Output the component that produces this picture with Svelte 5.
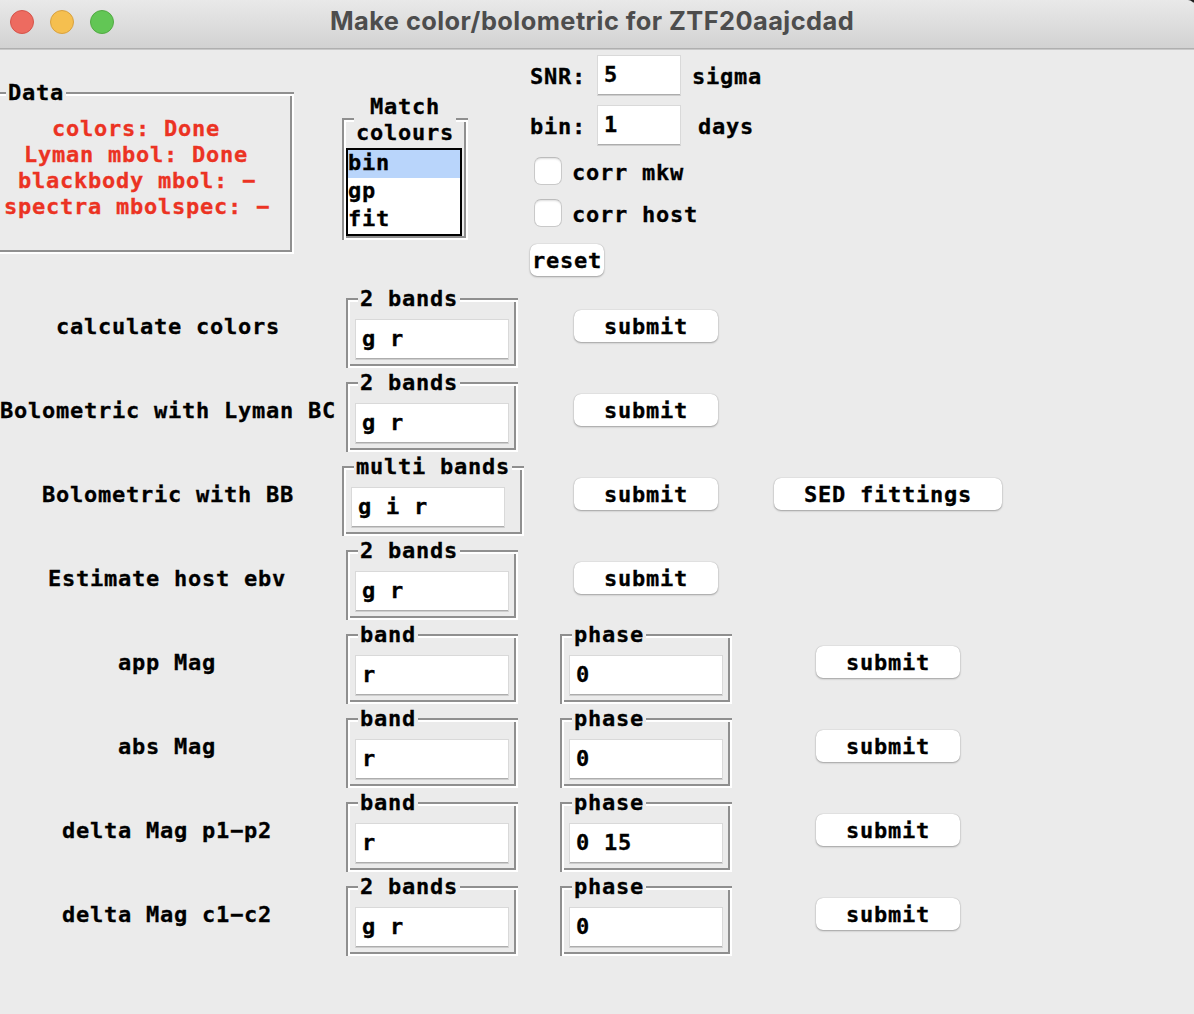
<script>
  const status = ['colors: Done', 'Lyman mbol: Done', 'blackbody mbol: −', 'spectra mbolspec: −'];
  const methods = ['bin', 'gp', 'fit'];
  let selected = $state('bin');

  const rows = [
    { label: 'calculate colors', fields: [{ title: '2 bands', value: 'g r' }], actions: ['submit'] },
    { label: 'Bolometric with Lyman BC', fields: [{ title: '2 bands', value: 'g r' }], actions: ['submit'] },
    { label: 'Bolometric with BB', fields: [{ title: 'multi bands', value: 'g i r', wide: true }], actions: ['submit', 'SED fittings'] },
    { label: 'Estimate host ebv', fields: [{ title: '2 bands', value: 'g r' }], actions: ['submit'] },
    { label: 'app Mag', fields: [{ title: 'band', value: 'r' }, { title: 'phase', value: '0' }], actions: ['submit'] },
    { label: 'abs Mag', fields: [{ title: 'band', value: 'r' }, { title: 'phase', value: '0' }], actions: ['submit'] },
    { label: 'delta Mag p1−p2', fields: [{ title: 'band', value: 'r' }, { title: 'phase', value: '0 15' }], actions: ['submit'] },
    { label: 'delta Mag c1−c2', fields: [{ title: '2 bands', value: 'g r' }, { title: 'phase', value: '0' }], actions: ['submit'] }
  ];
</script>

<div class="window">
  <header class="titlebar">
    <div class="lights">
      <span class="light close"></span>
      <span class="light minimize"></span>
      <span class="light zoom"></span>
    </div>
    <h1>Make color/bolometric for ZTF20aajcdad</h1>
  </header>

  <section class="top">
    <div class="groove data">
      <span class="legend">Data</span>
      <div class="status">
        {#each status as line}
          <div class:snap={line.length % 2 === 0}>{line}</div>
        {/each}
      </div>
    </div>

    <div class="groove match">
      <span class="legend two-line">Match<br />colours</span>
      <div class="listbox">
        {#each methods as method}
          <button class="option" class:selected={selected === method} onclick={() => (selected = method)}>{method}</button>
        {/each}
      </div>
    </div>

    <div class="options">
      <label class="setting snr"><span>SNR:</span><input class="entry" value="5" /><span>sigma</span></label>
      <label class="setting days"><span>bin:</span><input class="entry" value="1" /><span>days</span></label>
      <label class="check"><input type="checkbox" /><span>corr mkw</span></label>
      <label class="check"><input type="checkbox" /><span>corr host</span></label>
      <button class="push reset">reset</button>
    </div>
  </section>

  <section class="tasks">
    {#each rows as row}
      <div class="row">
        <div class="name" class:snap={row.label.length % 2 === 1}>{row.label}</div>
        {#each row.fields as field}
          <div class="cell">
            <div class="groove field" class:wide={field.wide}>
              <span class="legend">{field.title}</span>
              <input class="entry" value={field.value} />
            </div>
          </div>
        {/each}
        {#each row.actions as action}
          <div class="cell"><button class="push" class:large={action !== 'submit'}>{action}</button></div>
        {/each}
      </div>
    {/each}
  </section>
</div>

<style>
  :global(body) {
    margin: 0;
    background: #ebebeb;
  }

  .window {
    width: 1194px;
    height: 1014px;
    overflow: hidden;
    background: linear-gradient(#1c1c1c 2px, #ebebeb 3px);
    color: #000;
    font: bold 22px/26px 'DejaVu Sans Mono', monospace;
    letter-spacing: 0.755px;
    white-space: nowrap;
    -webkit-text-stroke: 0.3px;
  }

  button,
  input {
    font: inherit;
    letter-spacing: inherit;
    color: inherit;
    margin: 0;
    box-sizing: border-box;
  }

  .titlebar {
    box-sizing: border-box;
    height: 50px;
    display: grid;
    grid-template-columns: 330px 1fr;
    background: linear-gradient(#e9e9e9, #d2d2d2 48px);
    border-bottom: 1px solid #c8c8c8;
    border-top-right-radius: 6px;
    box-shadow: inset 0 -1px #afafaf;
  }

  .lights {
    display: flex;
    gap: 16px;
    padding: 10px;
  }

  .light {
    box-sizing: border-box;
    width: 24px;
    height: 24px;
    border-radius: 50%;
    border: 1px solid;
  }

  .close { background: #ed6b60; border-color: #d5544a; }
  .minimize { background: #f5bf4f; border-color: #d8a140; }
  .zoom { background: #62c655; border-color: #52aa43; }

  h1 {
    margin: 0;
    padding-top: 6px;
    font: 700 25.4px/30px Inter, sans-serif;
    letter-spacing: 0.44px;
    color: #4d4d4d;
    -webkit-text-stroke: 0;
  }

  /* Two-tone etched frame: dark outer top/left, light outer bottom/right, reversed inside. */
  .groove {
    --d: linear-gradient(#8f8f8f, #8f8f8f);
    --l: linear-gradient(#fff, #fff);
    position: relative;
    box-sizing: border-box;
    background-image: var(--d), var(--d), var(--l), var(--l), var(--l), var(--l), var(--d), var(--d);
    background-size: 100% 2px, 2px 100%, 100% 2px, 2px 100%, 100% 2px, 2px 100%, 100% 2px, 2px 100%;
    background-position: 0 0, 0 0, 0 100%, 100% 0, 0 2px, 2px 0, left 0 bottom 2px, right 2px top 0;
    background-repeat: no-repeat;
  }

  .legend {
    position: absolute;
    top: -12px;
    left: 12px;
    padding: 0 2px;
    background: #ebebeb;
    text-align: center;
  }

  .top {
    height: 234px;
    display: flex;
    align-items: flex-start;
  }

  .data {
    width: 304px;
    height: 162px;
    margin: 42px 0 0 -10px;
    padding: 24px 0 0 14px;
  }

  .data .legend {
    left: 16px;
  }

  .status {
    width: 266px;
    text-align: center;
    color: #eb3323;
  }

  .snap {
    padding-right: 2px;
  }

  .match {
    width: 126px;
    height: 122px;
    margin: 68px 0 0 48px;
    padding: 30px 6px 4px 4px;
  }

  .legend.two-line {
    top: -24px;
  }

  .listbox {
    box-sizing: border-box;
    height: 88px;
    border: 2px solid #000;
    background: #fff;
    position: relative;
  }

  .option {
    display: block;
    width: 100%;
    height: 28px;
    padding: 0 0 3px;
    border: 0;
    background: none;
    text-align: left;
    line-height: 25px;
  }

  .option.selected {
    background: #b9d5fb;
  }

  .options {
    margin-left: 62px;
    padding-top: 5px;
    display: flex;
    flex-direction: column;
    align-items: flex-start;
  }

  .setting {
    display: flex;
    align-items: center;
    height: 41px;
    margin-bottom: 9px;
  }

  .setting span {
    padding-top: 2px;
  }

  .setting .entry {
    width: 84px;
    margin: 0 11px;
  }

  .days .entry {
    margin-right: 17px;
  }

  .entry {
    display: block;
    width: 154px;
    height: 41px;
    padding: 0 6px 2px;
    border: 1px solid #d9d9d9;
    border-bottom-color: #cdcdcd;
    border-radius: 0;
    background: #fff;
    box-shadow: inset 0 -1px #adadad;
    outline: none;
  }

  .check {
    display: flex;
    gap: 10px;
    height: 28px;
    margin: 2px 0 12px 4px;
    line-height: 32px;
  }

  .check input {
    appearance: none;
    width: 28px;
    height: 28px;
    border: 1px solid #c9c9c9;
    border-top-color: #bcbcbc;
    border-radius: 7px;
    background: #fff;
    box-shadow: inset 0 2px 2px -1px #ddd;
  }

  .push {
    width: 144px;
    height: 32px;
    padding: 2px 0 0;
    border: 0;
    border-radius: 7px;
    background: #fff;
    box-shadow: 0 0 1px rgba(0, 0, 0, 0.3), 0 1px 2px rgba(0, 0, 0, 0.3);
    text-align: center;
    line-height: 30px;
  }

  .push.large {
    width: 228px;
  }

  .push.reset {
    width: 74px;
    margin-top: 5px;
  }

  .row {
    display: grid;
    grid-template-columns: 336px 192px 236px 248px;
    height: 84px;
    align-items: center;
    text-align: center;
  }

  .name {
    padding-top: 2px;
  }

  .cell {
    display: flex;
    justify-content: center;
  }

  .field {
    width: 172px;
    height: 70px;
    margin-top: 14px;
    padding: 21px 0 0 9px;
  }

  .field.wide {
    width: 182px;
    margin-left: 2px;
  }
</style>
